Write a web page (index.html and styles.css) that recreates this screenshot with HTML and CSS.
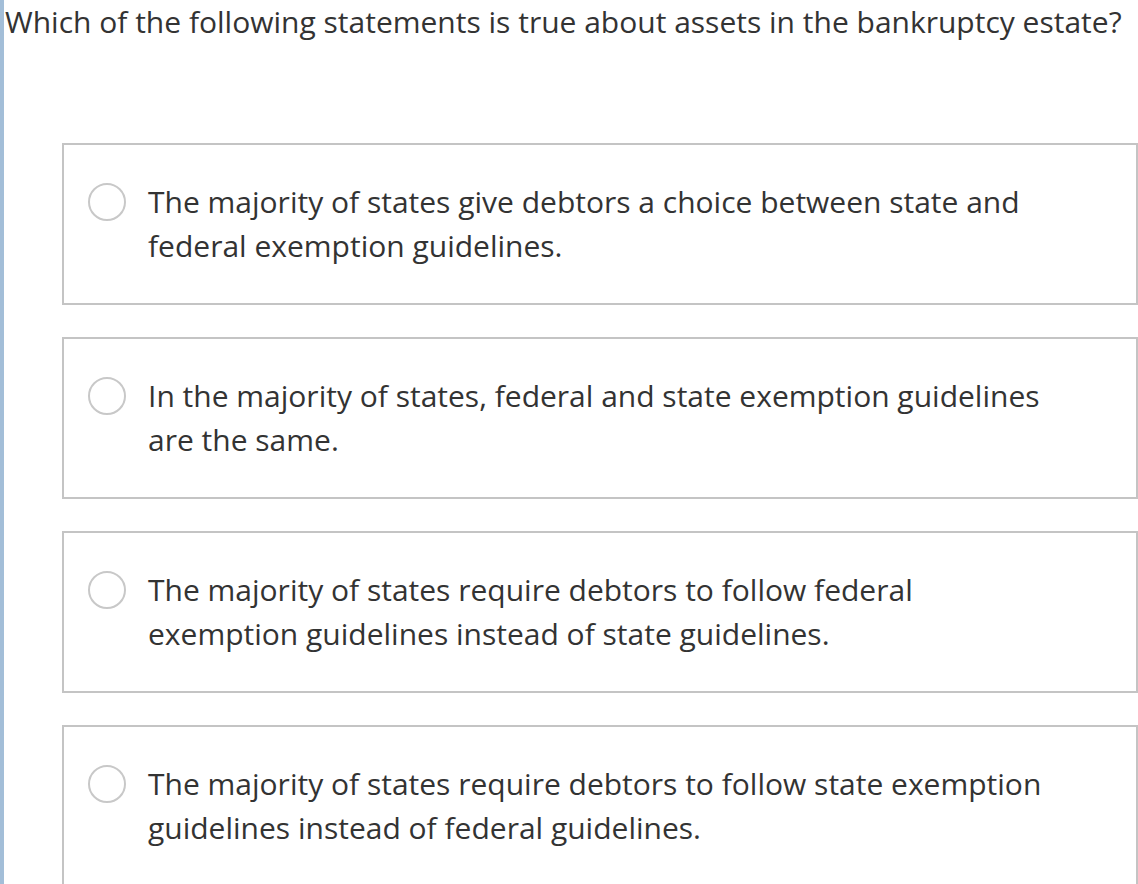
FILE: index.html
```html
<!DOCTYPE html>
<html lang="en">

<head>
	<meta charset="UTF-8" />
	<meta name="viewport" content="width=device-width, initial-scale=1.0" />
	<title>Question</title>
	<link rel="stylesheet" href="styles.css">
</head>

<body>
	<div id="question">
		<div class="stem">Which of the following statements is true about assets in the bankruptcy estate?</div>
		<ul id="answers">
			<li class="answer">
				<span class="radio"></span>
				<span class="label">The majority of states give debtors a choice between state and federal exemption guidelines.</span>
			</li>
			<li class="answer">
				<span class="radio"></span>
				<span class="label">In the majority of states, federal and state exemption guidelines are the same.</span>
			</li>
			<li class="answer">
				<span class="radio"></span>
				<span class="label">The majority of states require debtors to follow federal exemption guidelines instead of state guidelines.</span>
			</li>
			<li class="answer">
				<span class="radio"></span>
				<span class="label">The majority of states require debtors to follow state exemption guidelines instead of federal guidelines.</span>
			</li>
		</ul>
	</div>
</body>

</html>
```

FILE: styles.css
```css
* {
	padding: 0px;
	margin: 0px;
	list-style: none;
	box-sizing: border-box;
}

body {
	font-family: "Open Sans", "Liberation Sans", sans-serif;
	color: #333;
	background-color: white;
	overflow: hidden;
}

#question {
	min-height: 884px;
	padding-left: 1px;
	border-left: 4px solid #b4cce2;
	border-image: linear-gradient(to right, #a3bed8, #d0e0ee) 1;
}

#question .stem {
	font-size: 30px;
	line-height: 44px;
	white-space: nowrap;
}

#answers {
	margin-top: 99px;
	margin-left: 57px;
	display: flex;
	flex-direction: column;
	gap: 32px;
}

#answers .answer {
	width: 1076px;
	min-height: 162px;
	border: 2px solid #c4c4c4;
	padding: 35px 20px 35px 24px;
	display: flex;
	align-items: flex-start;
	gap: 22px;
}

#answers .radio {
	flex: none;
	width: 38px;
	height: 38px;
	margin-top: 3px;
	border: 2px solid #c8c8c8;
	border-radius: 50%;
}

#answers .label {
	font-size: 30px;
	line-height: 44px;
	width: 896px;
}
```
